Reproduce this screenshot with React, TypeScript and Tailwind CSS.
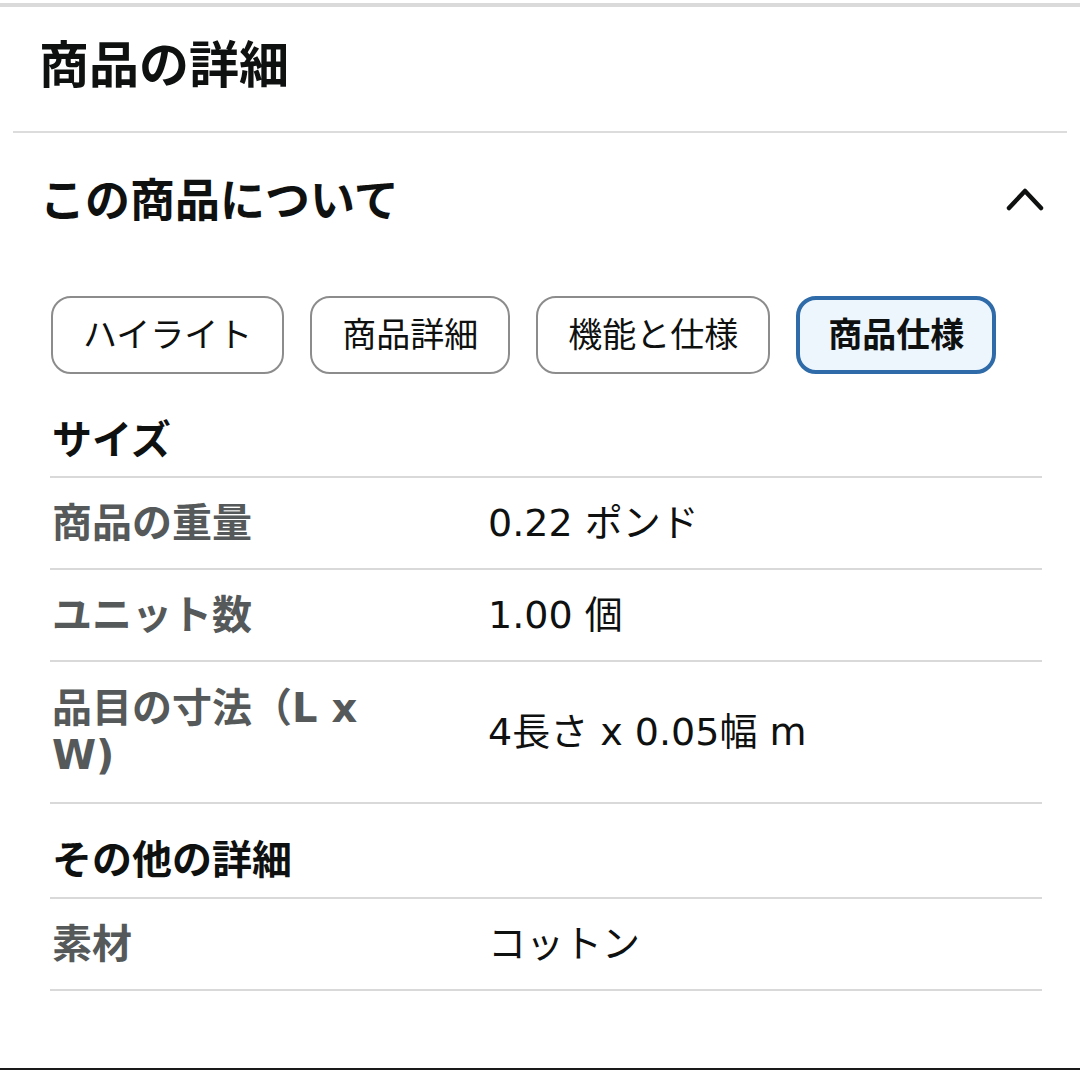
import React from "react";

const FONT = { fontFamily: '"Liberation Sans", "Noto Sans CJK JP", sans-serif' };
const WIDE = { fontFamily: '"DejaVu Sans", "Noto Sans CJK JP", sans-serif' };

function Tab({ label, active }: { label: string; active?: boolean }) {
  return (
    <div
      className={
        active
          ? "h-[78px] flex items-center rounded-[20px] border-[4px] border-[#2f6ba8] bg-[#edf6fd] px-[28px] text-[34px] font-bold text-[#0f1111]"
          : "h-[78px] flex items-center rounded-[20px] border-2 border-[#8c8c8c] bg-white px-[30px] text-[34px] text-[#0f1111]"
      }
    >
      {label}
    </div>
  );
}

function Divider() {
  return <div className="h-[2px] bg-[#d9d9d9]" />;
}

function Row({ label, value, tall }: { label: React.ReactNode; value: string; tall?: boolean }) {
  return (
    <div className={(tall ? "h-[140px]" : "h-[90px]") + " flex items-center pl-[2px]"}>
      <div className="w-[436px] shrink-0">
        <div className="w-[340px] text-[40px] leading-[47px] font-bold text-[#565959]" style={WIDE}>
          {label}
        </div>
      </div>
      <div className="text-[38px] leading-[47px] text-[#0f1111]" style={WIDE}>
        {value}
      </div>
    </div>
  );
}

export default function App() {
  return (
    <div className="w-[1080px] h-[1070px] bg-white flex flex-col" style={FONT}>
      <div className="h-[3px]" />
      <div className="h-[4px] bg-[#dadada]" />
      <div className="h-[124px] pl-[39px]">
        <h1 className="text-[50px] leading-[118px] font-bold text-[#0f1111]">商品の詳細</h1>
      </div>
      <div className="mx-[13px] h-[2px] bg-[#dcdcdc]" />
      <div className="h-[138px] flex items-center justify-between pl-[40px] pr-[36px]">
        <h2 className="text-[45px] font-bold text-[#0f1111]">この商品について</h2>
        <svg className="mb-[6px]" width="38" height="26" viewBox="0 0 38 26" fill="none">
          <path d="M3 22 L19 5 L35 22" stroke="#0f1111" strokeWidth="4.5" strokeLinecap="round" strokeLinejoin="round" />
        </svg>
      </div>
      <div className="pt-[25px] pl-[51px] flex gap-[26px]">
        <Tab label="ハイライト" />
        <Tab label="商品詳細" />
        <Tab label="機能と仕様" />
        <Tab label="商品仕様" active />
      </div>
      <div className="ml-[50px] w-[992px] flex flex-col">
        <div className="h-[102px] pt-[40px] pl-[2px]">
          <h3 className="text-[40px] leading-[52px] font-bold text-[#0f1111]">サイズ</h3>
        </div>
        <Divider />
        <Row label="商品の重量" value="0.22 ポンド" />
        <Divider />
        <Row label="ユニット数" value="1.00 個" />
        <Divider />
        <Row label="品目の寸法（L x W)" value="4長さ x 0.05幅 m" tall />
        <Divider />
        <div className="h-[93px] pt-[30px] pl-[2px]">
          <h3 className="text-[40px] leading-[52px] font-bold text-[#0f1111]">その他の詳細</h3>
        </div>
        <Divider />
        <Row label="素材" value="コットン" />
        <Divider />
      </div>
      <div className="flex-1" />
      <div className="h-[2px] bg-[#1a1a1a]" />
    </div>
  );
}
